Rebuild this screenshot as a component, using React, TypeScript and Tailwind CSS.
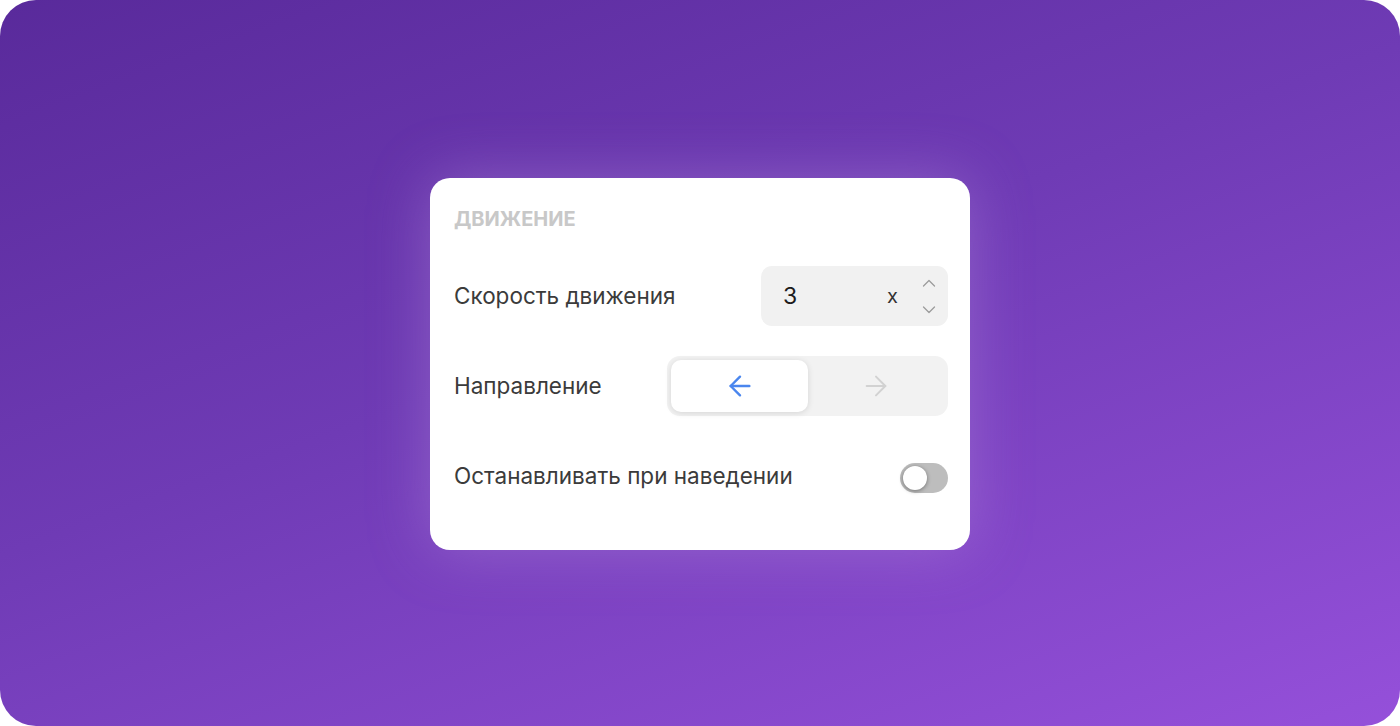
import { ArrowLeft, ArrowRight } from 'lucide-react'

function Chevron({ up }: { up?: boolean }) {
  return (
    <svg width="14" height="8" viewBox="0 0 14 8" fill="none" stroke="#9c9c9c" strokeWidth="1.3" strokeLinecap="round" strokeLinejoin="round">
      <polyline points={up ? '1.5,7 7,1.5 12.5,7' : '1.5,1 7,6.5 12.5,1'} />
    </svg>
  )
}

export default function App() {
  return (
    <div className="w-[1400px] h-[726px] bg-white" style={{ fontFamily: 'Inter, "Noto Sans", sans-serif' }}>
      <div className="w-full h-full rounded-[36px] bg-[linear-gradient(160deg,#592a9b_0%,#6f3bb5_45%,#9550da_100%)] flex items-center justify-center pt-[2px]">
        <div className="w-[540px] h-[372px] bg-white rounded-[20px] pt-[29px] px-[22px] shadow-[0_0_60px_rgba(180,140,220,0.45)]">
          <div className="text-[20px] leading-6 font-bold text-[#c8c8c8] pl-[2px]">ДВИЖЕНИЕ</div>

          <div className="mt-[35px] flex items-center justify-between h-[60px] pl-[2px]">
            <span className="text-[22.5px] text-[#3b3b3b]">Скорость движения</span>
            <div className="w-[187px] h-[60px] rounded-[11px] bg-[#f1f1f1] flex items-center pl-[22px] pr-[12px]">
              <span className="text-[23px] text-[#1c1c1c] flex-1">3</span>
              <span className="text-[20px] text-[#333] mr-[24px]">x</span>
              <div className="flex flex-col items-center gap-[19px] mt-[1px]">
                <Chevron up />
                <Chevron />
              </div>
            </div>
          </div>

          <div className="mt-[30px] flex items-center justify-between h-[60px] pl-[2px]">
            <span className="text-[22.5px] text-[#3b3b3b]">Направление</span>
            <div className="w-[281px] h-[60px] rounded-[13px] bg-[#f2f2f2] p-[4px] flex">
              <div className="w-[137px] h-full rounded-[10px] bg-white shadow-[0_1px_6px_rgba(0,0,0,0.12)] flex items-center justify-center text-[#4a86ee]">
                <ArrowLeft size={32} strokeWidth={1.8} />
              </div>
              <div className="flex-1 flex items-center justify-center text-[#d2d2d2]">
                <ArrowRight size={32} strokeWidth={1.5} />
              </div>
            </div>
          </div>

          <div className="mt-[30px] flex items-center justify-between h-[60px] pl-[2px]">
            <span className="text-[22.5px] text-[#3b3b3b]">Останавливать при наведении</span>
            <div className="w-[48px] h-[30px] mt-[3px] rounded-full bg-[#bdbdbd] flex items-center px-[3px]">
              <div className="w-[24px] h-[24px] rounded-full bg-white shadow-[0_1px_4px_rgba(0,0,0,0.4)]" />
            </div>
          </div>
        </div>
      </div>
    </div>
  )
}
